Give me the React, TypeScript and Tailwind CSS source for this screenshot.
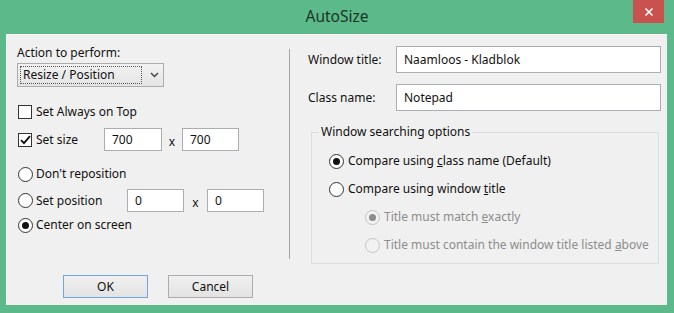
const font = { fontFamily: '"Noto Sans", "Open Sans", sans-serif' };

function Check({ checked }: { checked?: boolean }) {
  return (
    <span className="w-[14px] h-[14px] border border-[#333] bg-white flex items-center justify-center shrink-0">
      {checked && (
        <svg width="11" height="10" viewBox="0 0 11 10">
          <path d="M1 5.2 L4 8.2 L10 1.2" fill="none" stroke="#111" strokeWidth="1.9" />
        </svg>
      )}
    </span>
  );
}

function Radio({ checked, disabled }: { checked?: boolean; disabled?: boolean }) {
  return (
    <span
      className={
        "w-[15px] h-[15px] rounded-full border flex items-center justify-center shrink-0 " +
        (disabled ? "border-[#c4c4c4] bg-[#f2f2f2]" : "border-[#333] bg-white")
      }
    >
      {checked && (
        <span className={"w-[7px] h-[7px] rounded-full " + (disabled ? "bg-[#8c8c8c]" : "bg-[#111]")} />
      )}
    </span>
  );
}

function Field({ value, w, h = 23 }: { value: string; w: string; h?: number }) {
  return (
    <div
      className={"bg-white border border-[#abadb3] flex items-center pl-[7px] text-[#111] " + w}
      style={{ height: h }}
    >
      {value}
    </div>
  );
}

export default function App() {
  return (
    <div className="w-[674px] h-[313px] bg-[#5cb98a] flex flex-col text-[12px] text-[#111] whitespace-nowrap" style={font}>
      {/* title bar */}
      <div className="h-[34px] relative flex items-center justify-center">
        <span className="text-[15.5px] text-[#1c3526] -mt-[1px]">AutoSize</span>
        <div className="absolute right-[10px] top-0 w-[31px] h-[23px] bg-[#c9514e] flex items-center justify-center">
          <svg width="10" height="10" viewBox="0 0 10 10">
            <path d="M1.5 1.5 L8.5 8.5 M8.5 1.5 L1.5 8.5" stroke="#fff" strokeWidth="1.6" />
          </svg>
        </div>
      </div>

      {/* client area */}
      <div className="ml-[6px] mr-[7px] h-[271px] bg-[#f0f0f0] border-t border-l border-[#fafafa] flex flex-col">
        <div className="flex">
          {/* left column */}
          <div className="w-[282px] pl-[10px] pt-[10px] flex flex-col">
            <div className="leading-[16px]">Action to perform:</div>
            <div className="mt-[2px] w-[147px] h-[24px] border border-[#acacac] bg-gradient-to-b from-[#f2f2f2] to-[#e4e4e4] flex items-center pl-[2px]">
              <span className="border border-dotted border-[#555] w-[122px] h-[18px] flex items-center pl-[2px] leading-none">
                Resize / Position
              </span>
              <svg className="ml-[8px]" width="9" height="6" viewBox="0 0 9 6">
                <path d="M1 1 L4.5 4.5 L8 1" fill="none" stroke="#444" strokeWidth="1.5" />
              </svg>
            </div>

            <div className="mt-[15px] h-[20px] flex items-center pl-[1px]">
              <Check />
              <span className="ml-[4px]">Set Always on Top</span>
            </div>

            <div className="mt-[6px] h-[23px] flex items-center">
              <div className="w-[87px] flex items-center pl-[1px]">
                <Check checked />
                <span className="ml-[4px]">Set size</span>
              </div>
              <Field value="700" w="w-[58px]" />
              <span className="w-[20px] text-center mt-[4px]">x</span>
              <Field value="700" w="w-[57px]" />
            </div>

            <div className="mt-[13px] h-[20px] flex items-center pl-[1px]">
              <Radio />
              <span className="ml-[3px]">Don't reposition</span>
            </div>

            <div className="mt-[5px] h-[23px] flex items-center">
              <div className="w-[110px] flex items-center pl-[1px]">
                <Radio />
                <span className="ml-[3px]">Set position</span>
              </div>
              <Field value="0" w="w-[57px]" />
              <span className="w-[23px] text-center mt-[4px]">x</span>
              <Field value="0" w="w-[57px]" />
            </div>

            <div className="mt-[3px] h-[20px] flex items-center pl-[1px]">
              <Radio checked />
              <span className="ml-[3px]">Center on screen</span>
            </div>
          </div>

          {/* separator */}
          <div className="w-px h-[210px] mt-[14px] bg-[#a5a5a5]" />

          {/* right column */}
          <div className="flex-1 pl-[18px] pr-[6px] pt-[11px] flex flex-col">
            <div className="flex items-center">
              <span className="w-[88px]">Window title:</span>
              <Field value="Naamloos - Kladblok" w="flex-1" h={27} />
            </div>
            <div className="mt-[11px] flex items-center">
              <span className="w-[88px]">Class name:</span>
              <Field value="Notepad" w="flex-1" h={27} />
            </div>

            <fieldset className="mt-[13px] ml-[3px] mr-[2px] border border-[#dcdcdc] pl-[17px] pb-[8px]">
              <legend className="-ml-[10px] px-[2px] leading-[16px]">Window searching options</legend>
              <div className="mt-[11px] h-[20px] flex items-center">
                <Radio checked />
                <span className="ml-[4px]">
                  Compare using <u>c</u>lass name (Default)
                </span>
              </div>
              <div className="mt-[8px] h-[20px] flex items-center">
                <Radio />
                <span className="ml-[4px]">
                  Compare using window <u>t</u>itle
                </span>
              </div>
              <div className="mt-[8px] ml-[36px] h-[20px] flex items-center text-[#8d8d8d]">
                <Radio checked disabled />
                <span className="ml-[4px]">
                  Title must match <u>e</u>xactly
                </span>
              </div>
              <div className="mt-[8px] ml-[36px] h-[20px] flex items-center text-[#8d8d8d]">
                <Radio disabled />
                <span className="ml-[4px]">
                  Title must contain the window title listed <u>a</u>bove
                </span>
              </div>
            </fieldset>
          </div>
        </div>

        {/* buttons */}
        <div className="mt-auto mb-[7px] pl-[56px] flex gap-[20px]">
          <button className="w-[85px] h-[23px] border border-[#6fa8dc] bg-gradient-to-b from-[#f0f0f0] to-[#e3e3e3]">
            OK
          </button>
          <button className="w-[85px] h-[23px] border border-[#acacac] bg-gradient-to-b from-[#f0f0f0] to-[#e3e3e3]">
            Cancel
          </button>
        </div>
      </div>
    </div>
  );
}
